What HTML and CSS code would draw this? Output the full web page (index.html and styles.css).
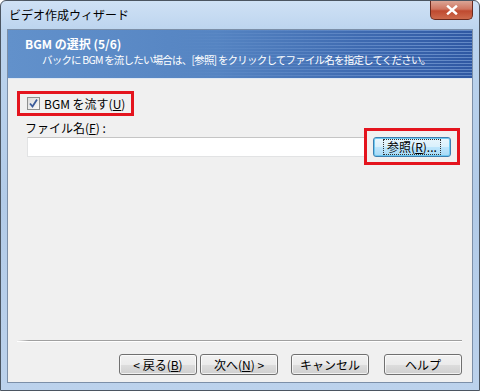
FILE: index.html
```html
<!DOCTYPE html>
<html lang="ja">
<head>
  <meta charset="UTF-8">
  <title>ビデオ作成ウィザード</title>
  <link rel="stylesheet" href="styles.css">
</head>
<body>
  <div class="window">
    <div class="titlebar">
      <span class="title">ビデオ作成ウィザード</span>
      <button class="close-button">
        <svg width="12" height="10" viewBox="0 0 12 10"><path d="M2 1.5 L10 8.5 M10 1.5 L2 8.5" stroke="#fff" stroke-width="2.4" stroke-linecap="square"/></svg>
      </button>
    </div>

    <div class="client">
      <div class="banner">
        <div class="banner-title">BGM の選択 (5/6)</div>
        <div class="banner-text">バックに BGM を流したい場合は、[参照] をクリックしてファイル名を指定してください。</div>
      </div>

      <div class="content">
        <div class="mark mark-check">
          <label class="check">
            <span class="check-box">
              <svg width="11" height="11" viewBox="0 0 11 11"><path d="M2 5.5 L4.5 8.5 L9 1.5" fill="none" stroke="#3b5b9a" stroke-width="1.8"/></svg>
            </span>
            <span>BGM を流す(<u>U</u>)</span>
          </label>
        </div>

        <div class="file-label">ファイル名(<u>F</u>) :</div>
        <div class="file-row">
          <input class="file-input" type="text">
          <div class="mark mark-browse">
            <button class="button browse-button"><span class="focus">参照(<u>R</u>)...</span></button>
          </div>
        </div>
      </div>

      <div class="footer">
        <div class="separator"></div>
        <div class="buttons">
          <button class="button back-button">&lt; 戻る(<u>B</u>)</button>
          <button class="button next-button">次へ(<u>N</u>) &gt;</button>
          <button class="button cancel-button">キャンセル</button>
          <button class="button help-button">ヘルプ</button>
        </div>
      </div>
    </div>
  </div>
</body>
</html>
```

FILE: styles.css
```css
html, body {
  margin: 0;
  padding: 0;
}
body {
  width: 480px;
  height: 391px;
  overflow: hidden;
  font-family: "Noto Sans CJK JP", "Noto Sans", sans-serif;
  font-size: 12px;
  color: #000;
}
.window {
  box-sizing: border-box;
  width: 480px;
  height: 391px;
  border: 1px solid #4b5561;
  border-radius: 6px 6px 0 0;
  background: linear-gradient(to bottom, #cfe1f5 0, #bcd4ee 30px, #b2cbe8 200px, #bcd2ec 391px);
  padding: 0 6px 7px 6px;
  display: flex;
  flex-direction: column;
}
.titlebar {
  height: 28px;
  display: flex;
  justify-content: space-between;
  align-items: flex-start;
}
.title {
  margin: 6px 0 0 2px;
  font-size: 12px;
  line-height: 16px;
  color: #000;
}
.close-button {
  width: 43px;
  height: 19px;
  padding: 0;
  border: 1px solid #6a2a1e;
  border-top: none;
  border-radius: 0 0 5px 5px;
  background: linear-gradient(to bottom, #dba595 0, #cf7560 45%, #bf4a30 55%, #cd6a4c 100%);
  display: flex;
  align-items: center;
  justify-content: center;
}
.client {
  flex: 1;
  border: 1px solid #7c8fa8;
  background: #f0f0f0;
  display: flex;
  flex-direction: column;
}
.banner {
  position: relative;
  height: 49px;
  box-sizing: border-box;
  padding: 6px 0 0 17px;
  color: #fff;
  background: linear-gradient(to right, #6291cb 0, #5584c2 45%, #3f6bb1 75%, #2f58a3 100%);
  border-bottom: 1px solid #dfe8f3;
  overflow: hidden;
}
.banner::after {
  content: "";
  position: absolute;
  inset: 0;
  background: repeating-linear-gradient(to bottom, rgba(140, 175, 225, 0.55) 0 1px, transparent 1px 3px);
  -webkit-mask-image: linear-gradient(to right, transparent 35%, #000 90%);
  mask-image: linear-gradient(to right, transparent 35%, #000 90%);
}
.banner-title {
  position: relative;
  z-index: 1;
  font-weight: bold;
  line-height: 16px;
}
.banner-text {
  position: relative;
  z-index: 1;
  margin-left: 17px;
  line-height: 15px;
  font-size: 10.5px;
  letter-spacing: -0.8px;
  white-space: nowrap;
}
.content {
  flex: 1;
  padding: 12px 12px 0 9px;
}
.mark {
  border: 3px solid #e4141e;
}
.mark-check {
  display: inline-flex;
  width: 104px;
  height: 19px;
  padding: 0 0 0 7px;
  align-items: center;
}
.check {
  display: flex;
  align-items: center;
  gap: 4px;
  font-size: 12px;
}
.check-box {
  box-sizing: border-box;
  width: 13px;
  height: 13px;
  border: 1px solid #8e8f8f;
  background: linear-gradient(135deg, #dcdcdc, #fafafa);
  display: flex;
  align-items: center;
  justify-content: center;
}
.file-label {
  margin: 5px 0 0 8px;
  line-height: 14px;
}
.file-row {
  display: flex;
  align-items: center;
  margin-top: -7px;
}
.file-input {
  flex: 1;
  height: 20px;
  box-sizing: border-box;
  margin: 0 0 0 10px;
  border: 1px solid #e2e3e4;
  border-top-color: #c5c5c5;
  background: #fff;
  padding: 0;
}
.mark-browse {
  box-sizing: border-box;
  width: 96px;
  height: 37px;
  margin-left: -2px;
  display: flex;
  align-items: center;
  justify-content: center;
}
.button {
  box-sizing: border-box;
  height: 21px;
  padding: 0;
  border: 1px solid #707070;
  border-radius: 3px;
  background: linear-gradient(to bottom, #f2f2f2 0, #ebebeb 50%, #dddddd 51%, #cfcfcf 100%);
  font-family: inherit;
  font-size: 12px;
  color: #000;
  box-shadow: inset 0 0 0 1px rgba(255, 255, 255, 0.7);
}
.browse-button {
  width: 78px;
  height: 20px;
  border-color: #3c7fb1;
  background: linear-gradient(to bottom, #eaf6fd 0, #d9f0fc 50%, #bee6fd 51%, #a7d9f5 100%);
  box-shadow: inset 0 0 0 1px #6fc9f0;
}
.focus {
  display: inline-block;
  padding: 0 3px;
  outline: 1px dotted #333;
  outline-offset: 0;
  line-height: 14px;
}
.footer {
  padding: 0 10px 7px 9px;
}
.separator {
  height: 1px;
  background: linear-gradient(to right, #f0f0f0, #a0a0a0 12px);
  border-bottom: 1px solid #fff;
}
.buttons {
  display: flex;
  justify-content: flex-end;
  margin-top: 12px;
}
.buttons .button {
  width: 78px;
}
.next-button {
  margin-left: 3px;
}
.cancel-button {
  margin-left: 13px;
}
.help-button {
  margin-left: 15px;
}
```
